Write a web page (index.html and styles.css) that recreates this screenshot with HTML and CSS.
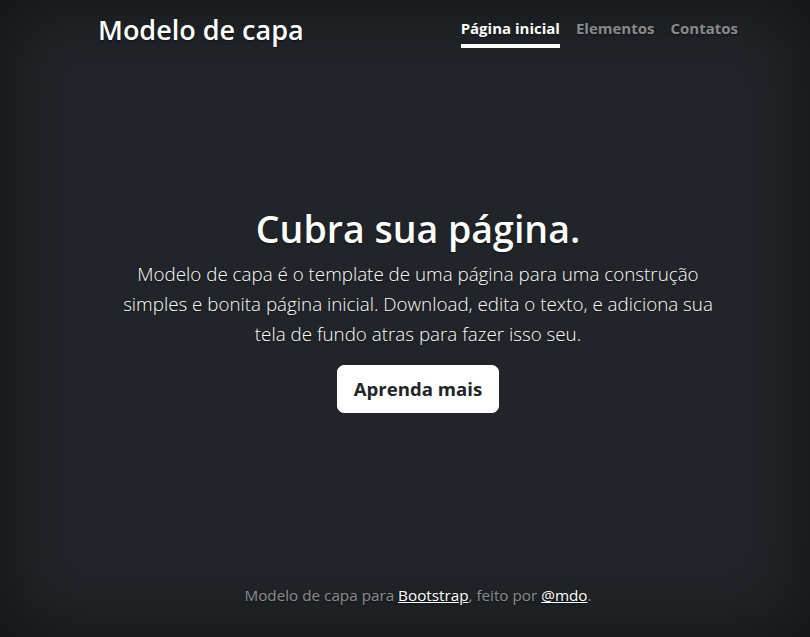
FILE: index.html
```html
<!DOCTYPE html>
<html lang="pt">
<head>
<meta charset="utf-8">
<title>Modelo de capa</title>
<link rel="stylesheet" href="styles.css">
</head>
<body>
<div class="cover">
  <header class="masthead">
    <h3 class="brand">Modelo de capa</h3>
    <nav class="nav">
      <a class="nav-link active" href="#">Página inicial</a>
      <a class="nav-link" href="#">Elementos</a>
      <a class="nav-link" href="#">Contatos</a>
    </nav>
  </header>
  <main class="hero">
    <h1 class="title">Cubra sua página.</h1>
    <p class="lead">Modelo de capa é o template de uma página para uma construção simples e bonita página inicial. Download, edita o texto, e adiciona sua tela de fundo atras para fazer isso seu.</p>
    <p class="cta"><a href="#" class="btn">Aprenda mais</a></p>
  </main>
  <footer class="foot">
    <p>Modelo de capa para <a href="#">Bootstrap</a>, feito por <a href="#">@mdo</a>.</p>
  </footer>
</div>
</body>
</html>
```
FILE: styles.css
```css
* { box-sizing: border-box; }
html, body { height: 100%; }
body {
  margin: 0;
  background: #212529;
  color: #fff;
  font-family: "Open Sans", "Noto Sans", sans-serif;
  font-size: 16px;
  line-height: 1.5;
  box-shadow: inset 0 0 5rem rgba(0,0,0,.5);
  text-shadow: 0 .05rem .1rem rgba(0,0,0,.5);
  display: flex;
}
.cover {
  width: 640px;
  margin-left: 98px;
  padding: 13px 0 16px;
  display: flex;
  flex-direction: column;
  min-height: 100%;
}
.masthead {
  display: flex;
  justify-content: space-between;
  align-items: center;
  margin-bottom: auto;
}
.brand {
  margin: 0;
  font-size: 27px;
  font-weight: 600;
  line-height: 1.2;
}
.nav { display: flex; gap: 16px; }
.nav-link {
  font-weight: 700;
  font-size: 15px;
  color: rgba(255,255,255,.5);
  text-decoration: none;
  padding: 4px 0;
  border-bottom: 4px solid transparent;
}
.nav-link.active { color: #fff; border-bottom-color: #fff; }
.hero { text-align: center; padding: 0 16px; }
.title {
  margin: 0 0 8px;
  font-size: 37.5px;
  font-weight: 600;
  line-height: 1.2;
}
.lead {
  margin: 0 0 16px;
  font-size: 18.8px;
  font-weight: 300;
  line-height: 30px;
}
.cta { margin: 0 0 12px; }
.btn {
  display: inline-block;
  background: #fff;
  color: #212529;
  text-shadow: none;
  font-weight: 700;
  font-size: 18.6px;
  line-height: 30px;
  padding: 8px 16px;
  border: 1px solid #fff;
  border-radius: 7px;
  text-decoration: none;
}
.foot {
  margin-top: auto;
  text-align: center;
  color: rgba(255,255,255,.5);
  font-size: 15.25px;
}
.foot p { margin: 0 0 14px; }
.foot a { color: #fff; }
```
